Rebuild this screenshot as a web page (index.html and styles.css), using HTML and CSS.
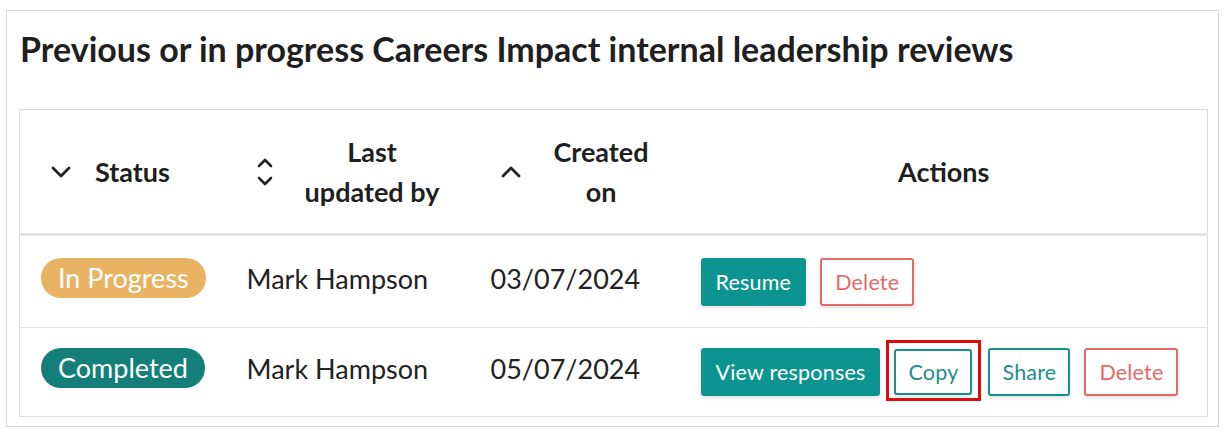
FILE: index.html
```html
<!DOCTYPE html>
<html lang="en">
<head>
<meta charset="utf-8">
<title>Reviews</title>
<link rel="stylesheet" href="styles.css">
</head>
<body>
<section class="card">
  <h2 class="card-title">Previous or in progress Careers Impact internal leadership reviews</h2>
  <table class="reviews">
    <colgroup>
      <col class="c-status"><col class="c-updated"><col class="c-created"><col class="c-actions">
    </colgroup>
    <thead>
      <tr>
        <th class="th-sort">
          <div class="th-inner th-left">
            <svg class="sort-icon" width="22" height="14" viewBox="0 0 22 14"><path d="M3 3 L11 11 L19 3" fill="none" stroke="#222" stroke-width="2.8" stroke-linecap="round" stroke-linejoin="round"/></svg>
            <span class="th-label">Status</span>
          </div>
        </th>
        <th class="th-sort">
          <div class="th-inner">
            <svg class="sort-icon" width="18" height="30" viewBox="0 0 18 30"><path d="M3 9 L9 3 L15 9 M3 21 L9 27 L15 21" fill="none" stroke="#222" stroke-width="2.6" stroke-linecap="round" stroke-linejoin="round"/></svg>
            <span class="th-label th-center">Last<br>updated by</span>
          </div>
        </th>
        <th class="th-sort">
          <div class="th-inner">
            <svg class="sort-icon" width="22" height="14" viewBox="0 0 22 14"><path d="M3 11 L11 3 L19 11" fill="none" stroke="#222" stroke-width="2.8" stroke-linecap="round" stroke-linejoin="round"/></svg>
            <span class="th-label th-center">Created<br>on</span>
          </div>
        </th>
        <th class="th-actions">Actions</th>
      </tr>
    </thead>
    <tbody>
      <tr>
        <td><span class="badge badge-progress">In Progress</span></td>
        <td class="cell-text">Mark Hampson</td>
        <td class="cell-text">03/07/2024</td>
        <td>
          <div class="actions">
            <button class="btn btn-primary">Resume</button>
            <button class="btn btn-danger">Delete</button>
          </div>
        </td>
      </tr>
      <tr>
        <td><span class="badge badge-done">Completed</span></td>
        <td class="cell-text">Mark Hampson</td>
        <td class="cell-text">05/07/2024</td>
        <td>
          <div class="actions">
            <button class="btn btn-primary">View responses</button>
            <span class="highlight"><button class="btn btn-outline btn-copy">Copy</button></span>
            <button class="btn btn-outline">Share</button>
            <button class="btn btn-danger">Delete</button>
          </div>
        </td>
      </tr>
    </tbody>
  </table>
</section>
</body>
</html>
```

FILE: styles.css
```css
* { box-sizing: border-box; }
html, body { margin: 0; background: #fff; }
body {
  font-family: Lato, "Open Sans", "Liberation Sans", sans-serif;
  color: #222;
  padding: 10px 9px 0 6px;
}
.card {
  border: 1px solid #d9d9d9;
  padding: 16px 10px 10px 12px;
  height: 417px;
}
.card-title {
  margin: 0 0 38px 1px;
  font-size: 34px;
  font-weight: 700;
  line-height: 44px;
  color: #1f1f1f;
}
.reviews {
  width: 100%;
  border-collapse: collapse;
  border: 1px solid #dcdcdc;
  table-layout: fixed;
}
.c-status { width: 207px; }
.c-updated { width: 244px; }
.c-created { width: 210px; }
thead th {
  height: 125px;
  border-bottom: 3px solid #e4e4e8;
  font-size: 27px;
  font-weight: 700;
  padding: 0;
  vertical-align: middle;
  color: #1f1f1f;
}
.th-inner {
  display: flex;
  align-items: center;
  padding-left: 29px;
}
.th-left { padding-left: 30px; gap: 23px; }
.th-label { line-height: 40px; }
.th-center { flex: 1; text-align: center; }
.sort-icon { flex: none; display: block; }
.th-actions { text-align: center; padding-left: 0; }
tbody td {
  padding: 22px 0 21px 20px;
  border-bottom: 1px solid #e3e3e3;
  vertical-align: top;
}
tbody tr:last-child td { border-bottom: none; padding-top: 20px; padding-bottom: 20px; }
tbody td:first-child { padding-left: 21px; }
.cell-text {
  font-size: 27px;
  line-height: 42px;
  color: #222;
}
.badge {
  display: inline-block;
  height: 40px;
  line-height: 40px;
  padding: 0 17px;
  border-radius: 20px;
  color: #fff;
  font-size: 27px;
}
.badge-progress { background: #e8b464; }
.badge-done { background: #137f78; }
.actions {
  display: flex;
  align-items: center;
  gap: 14px;
}
.btn {
  height: 48px;
  padding: 0 13px;
  font-family: inherit;
  font-size: 21.5px;
  border-radius: 3px;
  background: #fff;
  cursor: pointer;
  box-shadow: 0 2px 4px rgba(0,0,0,0.12);
  letter-spacing: 0.2px;
}
.btn-primary {
  background: #0c9590;
  color: #fff;
  border: none;
  padding: 0 15px;
}
.btn-danger {
  border: 2px solid #e46a6a;
  color: #e46a6a;
}
.btn-outline {
  border: 2px solid #1a8f8a;
  color: #1a8f8a;
  padding: 0 12px;
}
.btn-copy { height: 46px; margin-right: 2px; }
.highlight {
  position: relative;
  display: inline-flex;
}
.highlight::after {
  content: "";
  position: absolute;
  left: -8px;
  right: -7px;
  top: -9px;
  bottom: -6px;
  border: 3px solid #dd0b0b;
  pointer-events: none;
}
```
